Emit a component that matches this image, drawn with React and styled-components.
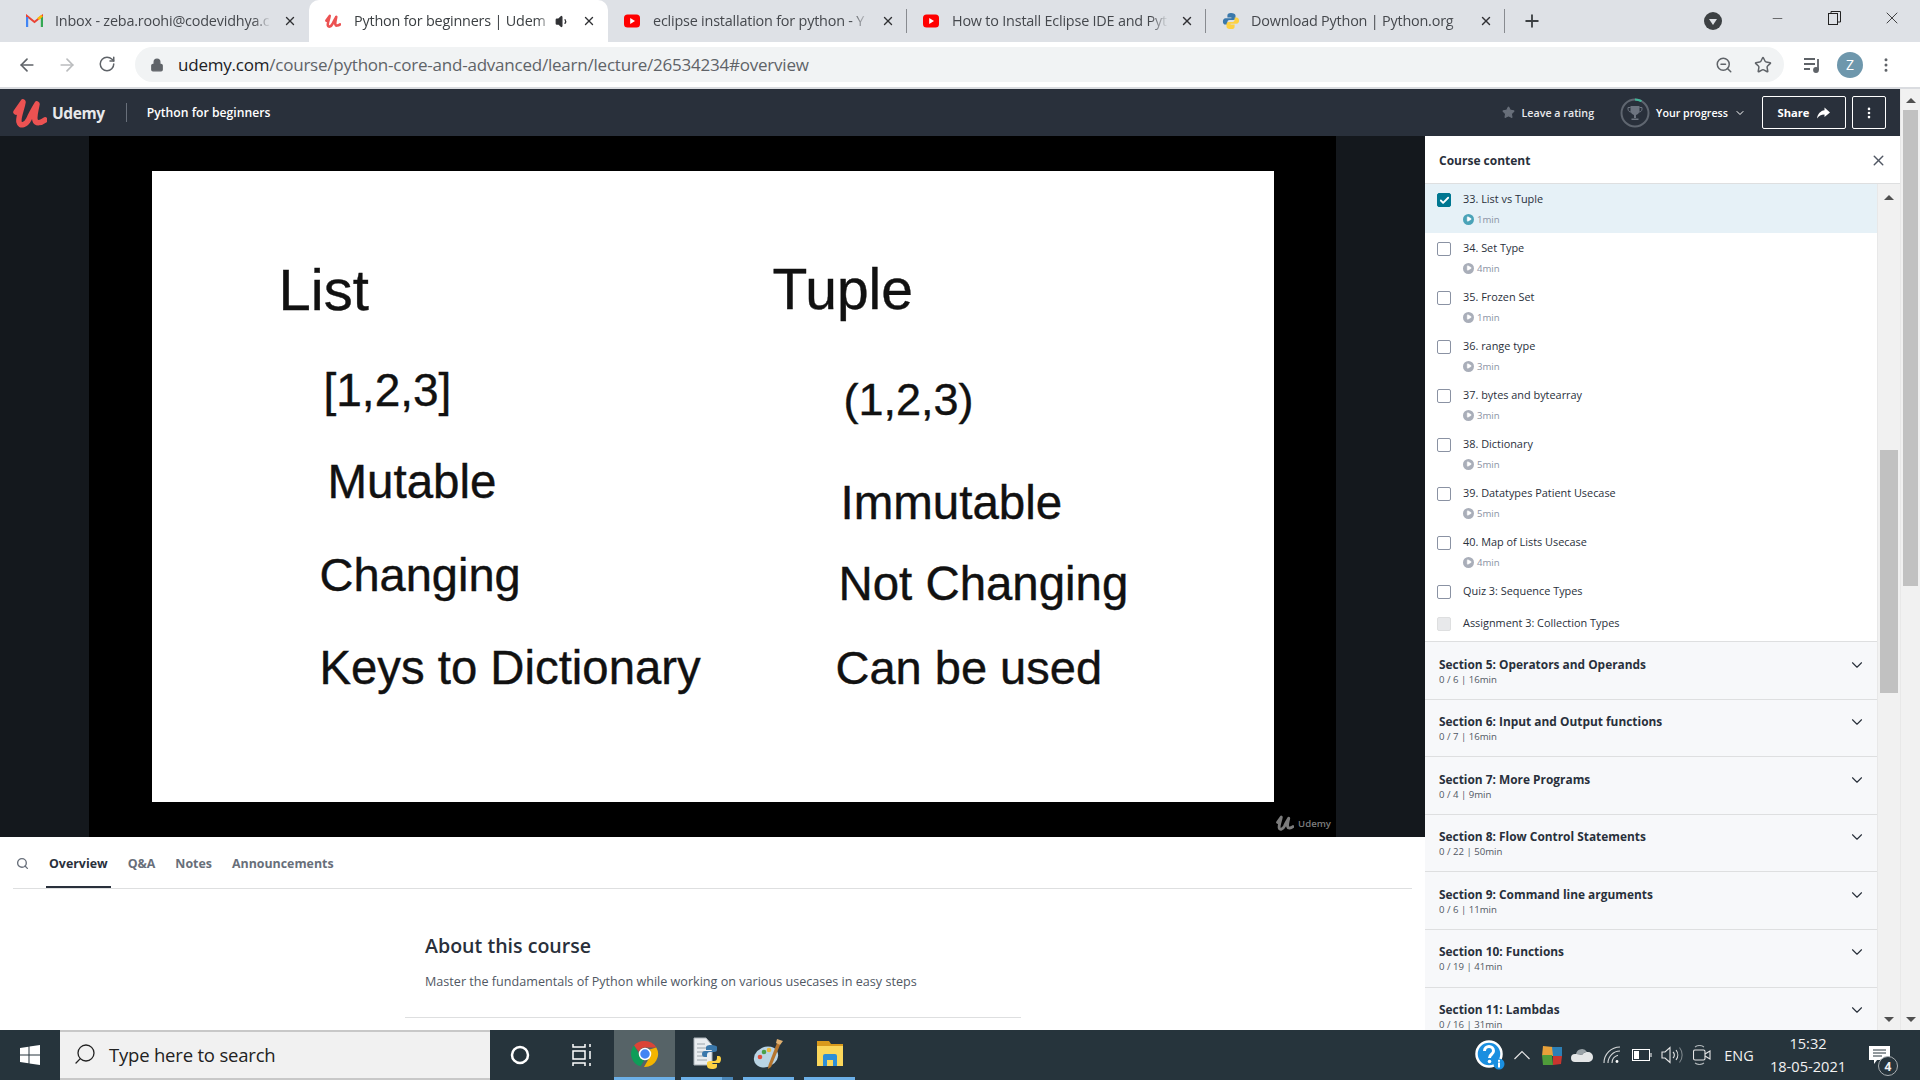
import React from "react";
import styled, { createGlobalStyle } from "styled-components";
import {
  ArrowLeft,
  ArrowRight,
  RotateCw,
  Lock,
  ZoomOut,
  Star,
  X,
  Plus,
  Minus,
  ChevronDown,
  Search,
  Volume1,
  Check,
  Play,
  EllipsisVertical
} from "lucide-react";

const GlobalStyle = createGlobalStyle`
  html, body {
    margin: 0;
    padding: 0;
    background: #fff;
  }
  * {
    box-sizing: border-box;
  }
`;

const uiFont = `"Open Sans", "Noto Sans", sans-serif`;

const Page = styled.div`
  width: 1920px;
  height: 1080px;
  overflow: hidden;
  display: flex;
  flex-direction: column;
  font-family: ${uiFont};
`;

/* browser chrome */
const TabStrip = styled.div`
  height: 42px;
  background: #dee1e6;
  display: flex;
  align-items: stretch;
  padding-left: 10px;
  flex: none;
`;

const Tab = styled.div`
  position: relative;
  width: 299px;
  display: flex;
  align-items: center;
  padding: 0 12px 0 16px;
  background: ${p => (p.$active ? "#fff" : "transparent")};
  border-radius: 10px 10px 0 0;
  color: ${p => (p.$active ? "#3c4043" : "#45484d")};
  font-size: 14.4px;
  letter-spacing: -0.2px;

  &::after {
    content: "";
    display: ${p => (p.$sep ? "block" : "none")};
    position: absolute;
    right: 0;
    top: 9px;
    height: 24px;
    width: 1px;
    background: #888b90;
  }
`;

const TabIcon = styled.span`
  width: 29px;
  flex: none;
  display: flex;
  align-items: center;
`;

const TabTitle = styled.span`
  flex: 1;
  overflow: hidden;
  white-space: nowrap;
  padding-bottom: 2px;
  -webkit-mask-image: linear-gradient(to right, #000 92%, transparent);
  mask-image: linear-gradient(to right, #000 92%, transparent);
`;

const TabAction = styled.span`
  flex: none;
  display: flex;
  align-items: center;
  margin-left: ${p => p.$gap || 4}px;
  color: #303134;
`;

const NewTab = styled.div`
  width: 54px;
  display: flex;
  align-items: center;
  justify-content: center;
  color: #3c4043;
`;

const WindowControls = styled.div`
  margin-left: auto;
  display: flex;
  align-items: flex-start;
  color: #222;
`;

const ProfileDot = styled.div`
  width: 18px;
  height: 18px;
  margin: 12px 27px 0 0;
  border-radius: 50%;
  background: #3c4043;
  display: flex;
  align-items: center;
  justify-content: center;
  &::after {
    content: "";
    border-left: 4px solid transparent;
    border-right: 4px solid transparent;
    border-top: 6px solid #dee1e6;
    margin-top: 2px;
  }
`;

const WinButton = styled.div`
  width: 57px;
  height: 36px;
  display: flex;
  align-items: center;
  justify-content: center;
`;

const Toolbar = styled.div`
  height: 47px;
  flex: none;
  background: #fff;
  border-bottom: 2px solid #dadce0;
  display: flex;
  align-items: center;
  color: #5f6368;
`;

const NavButton = styled.div`
  width: 40px;
  display: flex;
  justify-content: center;
  color: ${p => (p.$dim ? "#babcbe" : "#5f6368")};
`;

const NavGroup = styled.div`
  display: flex;
  width: 135px;
  padding-left: 7px;
`;

const Omnibox = styled.div`
  width: 1649px;
  height: 35px;
  border-radius: 18px;
  background: #f1f3f4;
  display: flex;
  align-items: center;
  padding: 0 8px 0 15px;
`;

const Url = styled.div`
  margin-left: 14px;
  font-size: 17px;
  letter-spacing: -0.22px;
  color: #5f6368;
  b {
    font-weight: 400;
    color: #202124;
  }
`;

const OmniIcons = styled.div`
  margin-left: auto;
  display: flex;
  align-items: center;
  gap: 21px;
  padding-right: 4px;
`;

const ToolbarRight = styled.div`
  display: flex;
  align-items: center;
  padding-left: 19px;
  gap: 14px;
`;

const Avatar = styled.div`
  width: 26px;
  height: 26px;
  border-radius: 50%;
  background: #6e97ac;
  color: #fff;
  font-size: 14px;
  display: flex;
  align-items: center;
  justify-content: center;
`;

/* page under the browser chrome */
const Viewport = styled.div`
  flex: 1;
  min-height: 0;
  display: flex;
`;

const Content = styled.div`
  flex: 1;
  min-width: 0;
  display: flex;
  flex-direction: column;
`;

const Scrollbar = styled.div`
  flex: none;
  width: ${p => p.$width}px;
  background: #f1f1f1;
  display: flex;
  flex-direction: column;
  align-items: center;
  justify-content: space-between;
  padding: ${p => p.$padTop}px 0 8px;
  position: relative;
  border-left: 1px solid #e8e8e8;
`;

const ScrollThumb = styled.div`
  position: absolute;
  left: 2px;
  right: 2px;
  top: ${p => p.$top}px;
  height: ${p => p.$height}px;
  background: #c1c1c1;
`;

const Arrow = styled.div`
  width: 0;
  height: 0;
  border-left: 5px solid transparent;
  border-right: 5px solid transparent;
  border-${p => (p.$down ? "top" : "bottom")}: 5px solid #505050;
`;

const Header = styled.header`
  height: 47px;
  flex: none;
  background: #29303b;
  display: flex;
  align-items: center;
  color: #fff;
  padding: 0 14px 0 13px;
`;

const LogoWord = styled.span`
  font-size: 15.5px;
  font-weight: 700;
  margin-left: 5px;
  color: #e8e9eb;
  letter-spacing: -0.4px;
`;

const HeaderDivider = styled.span`
  width: 1px;
  height: 19px;
  background: #686f7a;
  margin: 0 20px 0 21px;
`;

const CourseTitle = styled.span`
  font-size: 12.2px;
  font-weight: 600;
`;

const HeaderRight = styled.div`
  margin-left: auto;
  display: flex;
  align-items: center;
  font-size: 10.7px;
  font-weight: 600;
`;

const Rating = styled.span`
  display: flex;
  align-items: center;
  gap: 7px;
  margin-right: 26px;
  color: #e8e9eb;
`;

const Progress = styled.span`
  display: flex;
  align-items: center;
  gap: 6px;
  margin-right: 16px;
`;

const HeaderButton = styled.div`
  height: 33px;
  width: ${p => p.$width}px;
  border: 1px solid #fff;
  border-radius: 2px;
  display: flex;
  align-items: center;
  justify-content: center;
  gap: 8px;
  font-size: 11.2px;
  font-weight: 700;
  margin-left: ${p => p.$gap || 0}px;
`;

const Columns = styled.div`
  flex: 1;
  min-height: 0;
  display: grid;
  grid-template-columns: 1425px 475px;
`;

const Main = styled.main`
  display: flex;
  flex-direction: column;
  min-height: 0;
  overflow: hidden;
  background: #fff;
`;

/* video player */
const Player = styled.div`
  height: 701px;
  flex: none;
  background: #14181d;
  display: flex;
  justify-content: center;
`;

const Stage = styled.div`
  width: 1247px;
  position: relative;
  background: #000;
  display: flex;
  justify-content: center;
  padding-top: 35px;
`;

const Slide = styled.div`
  position: relative;
  width: 1122px;
  height: 631px;
  background: #fff;
  font-family: "Liberation Sans", Arial, sans-serif;
  color: #111;
  -webkit-text-stroke: 0.4px #111;
`;

const SlideText = styled.span`
  position: absolute;
  left: ${p => p.$x}px;
  top: ${p => p.$y}px;
  font-size: ${p => p.$size}px;
  line-height: 1;
  white-space: nowrap;
`;

const Watermark = styled.div`
  position: absolute;
  right: 5px;
  bottom: 6px;
  display: flex;
  align-items: center;
  gap: 4px;
  font-size: 9.6px;
  font-weight: 600;
  color: #7c7c7c;
`;

const TabsRow = styled.nav`
  height: 52px;
  flex: none;
  margin: 0 13px;
  display: flex;
  align-items: flex-end;
  border-bottom: 1px solid #dedfe0;
  color: #686f7a;
  font-size: 12.4px;
  font-weight: 700;
`;

const SearchTab = styled.div`
  width: 33px;
  height: 100%;
  display: flex;
  align-items: center;
  padding: 2px 0 0 3px;
`;

const PageTab = styled.div`
  height: 100%;
  display: flex;
  align-items: center;
  padding: 2px 3px 0;
  margin-right: 14px;
  color: ${p => (p.$active ? "#29303b" : "#686f7a")};
  box-shadow: ${p => (p.$active ? "inset 0 -2px 0 #29303b" : "none")};
`;

const About = styled.section`
  width: 616px;
  margin: 44px 0 0 405px;
  border-bottom: 1px solid #dedfe0;
  padding: 0 20px 26px;
  color: #29303b;
`;

const AboutTitle = styled.h2`
  margin: 0 0 14px;
  font-size: 19.6px;
  line-height: 26px;
  font-weight: 600;
`;

const AboutText = styled.p`
  margin: 0;
  font-size: 12.6px;
  line-height: 18px;
  color: #505763;
`;

/* course content sidebar */
const Sidebar = styled.aside`
  display: flex;
  flex-direction: column;
  min-height: 0;
  background: #fff;
`;

const SidebarHeader = styled.div`
  height: 48px;
  flex: none;
  border-bottom: 1px solid #dedfe0;
  display: flex;
  align-items: center;
  justify-content: space-between;
  padding: 1px 13px 0 14px;
  font-size: 12px;
  font-weight: 700;
  color: #29303b;
`;

const SidebarBody = styled.div`
  flex: 1;
  min-height: 0;
  display: flex;
`;

const ContentList = styled.div`
  flex: 1;
  min-width: 0;
  overflow: hidden;
`;

const Lecture = styled.div`
  height: ${p => p.$height}px;
  background: ${p => (p.$current ? "#e6f1f7" : "#fff")};
  display: flex;
  align-items: flex-start;
  padding: ${p => p.$top}px 12px 0;
  gap: 12px;
  color: #29303b;
  font-size: 10.9px;
`;

const CheckBox = styled.span`
  width: 14px;
  height: 14px;
  flex: none;
  border-radius: 2px;
  margin-top: 2px;
  border: 1px solid ${p => (p.$disabled ? "#dedfe0" : p.$checked ? "#007791" : "#8a92a3")};
  background: ${p => (p.$checked ? "#007791" : p.$disabled ? "#e8e9eb" : "#fff")};
  display: flex;
  align-items: center;
  justify-content: center;
  color: #fff;
`;

const LectureName = styled.div`
  line-height: 16px;
`;

const Duration = styled.div`
  display: flex;
  align-items: center;
  gap: 3px;
  margin-top: 6px;
  height: 12px;
  font-size: 9.6px;
  color: #8a92a3;
`;

const PlayDot = styled.span`
  width: 11px;
  height: 11px;
  border-radius: 50%;
  background: ${p => (p.$current ? "#4aa3b8" : "#a9aeb9")};
  display: flex;
  align-items: center;
  justify-content: center;
  color: #fff;
`;

const SectionRow = styled.div`
  height: 57.6px;
  background: #f7f8fa;
  border-top: 1px solid #dedfe0;
  display: flex;
  justify-content: space-between;
  padding: 13.5px 11px 0 14px;
  color: #29303b;
`;

const SectionTitle = styled.div`
  font-size: 11.9px;
  line-height: 17px;
  font-weight: 700;
`;

const SectionMeta = styled.div`
  font-size: 9.6px;
  line-height: 13px;
  color: #505763;
`;

/* windows taskbar */
const Taskbar = styled.footer`
  height: 50px;
  flex: none;
  background: #26343c;
  display: flex;
  align-items: stretch;
  color: #fff;
`;

const StartButton = styled.div`
  width: 60px;
  display: flex;
  align-items: center;
  justify-content: center;
`;

const SearchBox = styled.div`
  width: 430px;
  background: #f1f1f1;
  border: 2px solid #c8c8c8;
  border-left: 0;
  border-right: 0;
  display: flex;
  align-items: center;
  gap: 12px;
  padding: 0 0 2px 13px;
  color: #222;
  font-size: 18.5px;
  letter-spacing: -0.2px;
`;

const MirroredIcon = styled.span`
  display: flex;
  transform: scaleX(-1);
`;

const TaskSlot = styled.div`
  width: ${p => p.$width}px;
  margin-left: ${p => p.$gap || 0}px;
  display: flex;
  align-items: center;
  justify-content: center;
  position: relative;
  background: ${p => (p.$on ? "#566367" : "transparent")};
  border-bottom: ${p => (p.$open ? "3px solid #6cb0e8" : "0")};

  &::after {
    content: "";
    display: ${p => (p.$stacked ? "block" : "none")};
    position: absolute;
    right: 0;
    bottom: -3px;
    width: 11px;
    height: 3px;
    background: #4a86b8;
  }
`;

const Tray = styled.div`
  margin-left: auto;
  display: flex;
  align-items: stretch;
  font-size: 14.4px;
  color: #f2f2f2;
`;

const TraySlot = styled.div`
  width: ${p => p.$width || 30}px;
  display: flex;
  align-items: center;
  justify-content: center;
  text-align: center;
`;

const Clock = styled.div`
  width: 94px;
  align-self: center;
  text-align: center;
  font-size: 14.6px;
  line-height: 23px;
`;

const NotifyButton = styled.div`
  position: relative;
  width: 65px;
  padding-left: 14px;
  display: flex;
  align-items: center;
`;

const NotifyBadge = styled.span`
  position: absolute;
  right: 22px;
  bottom: 4px;
  width: 20px;
  height: 20px;
  border-radius: 50%;
  background: #26343c;
  border: 1.5px solid #aab0b3;
  font-size: 12px;
  font-weight: 700;
  display: flex;
  align-items: center;
  justify-content: center;
`;

const HelpIcon = () => (
  <svg width="30" height="30" viewBox="0 0 30 30">
    <circle cx="14" cy="14" r="12.5" fill="#1a8fe0" stroke="#fff" strokeWidth="2.5" />
    <path d="M9.5 11c0-6 9-6 9 0 0 3.5-4 3-4 7" fill="none" stroke="#fff" strokeWidth="3" />
    <circle cx="14.5" cy="21.5" r="1.8" fill="#fff" />
    <circle cx="24" cy="24" r="5.5" fill="#1a8fe0" />
    <rect x="23" y="22.5" width="2" height="5" fill="#fff" />
    <rect x="23" y="19.8" width="2" height="2" fill="#fff" />
  </svg>
);

const GmailIcon = () => (
  <svg width="17" height="14" viewBox="0 0 17 14">
    <path d="M1 13V2l7.5 6L16 2v11" fill="none" stroke="#ea4335" strokeWidth="2" />
    <path d="M1 3v10" stroke="#4285f4" strokeWidth="2.4" />
    <path d="M16 3v10" stroke="#34a853" strokeWidth="2.4" />
    <path d="M12 5l4-3.2" stroke="#fbbc04" strokeWidth="2.4" />
  </svg>
);

const UdemyMark = ({ width = 16, color = "#ec5252" }) => (
  <svg width={width} height={(width * 30) / 34} viewBox="0 0 34 30">
    <path
      d="M3 14L10 4C9 11 5 19 6 24C7 29 13 27 16 21C18 16 21 11 24 6C23 12 21 18 22 22C23 26 28 25 32 22"
      fill="none"
      stroke={color}
      strokeWidth="5.5"
      strokeLinecap="round"
      strokeLinejoin="round"
    />
  </svg>
);

const YoutubeIcon = () => (
  <svg width="16" height="16" viewBox="0 0 16 16">
    <rect x="0" y="1.5" width="16" height="13" rx="3.5" fill="#f00" />
    <path d="M6.2 5v6L11 8z" fill="#fff" />
  </svg>
);

const PythonIcon = ({ size = 20 }) => (
  <svg width={size} height={size} viewBox="0 0 20 20">
    <path
      d="M10 1C7 1 6 2 6 4v2h4.5v1H4C2 7 1 8.5 1 10.5S2 14 4 14h2v-2.5C6 10 7 9 8.5 9h4C14 9 15 8 15 6.5V4c0-2-2-3-5-3z"
      fill="#3a78ab"
    />
    <path
      d="M10 19c3 0 4-1 4-3v-2H9.5v-1H16c2 0 3-1.5 3-3.5S18 6 16 6h-2v2.5C14 10 13 11 11.5 11h-4C6 11 5 12 5 13.5V16c0 2 2 3 5 3z"
      fill="#fdd142"
    />
  </svg>
);

const ShareArrow = () => (
  <svg width="13" height="12" viewBox="0 0 13 12" fill="#fff">
    <path d="M7.5 0.5L13 5.5 7.5 10V7.5C4 7.5 2 8.8 0 11.5 0.7 7 3.5 3.8 7.5 3.3z" />
  </svg>
);

const ProgressRing = () => (
  <svg width="30" height="30" viewBox="0 0 30 30" fill="none">
    <circle cx="15" cy="15" r="13.5" stroke="#5f6670" strokeWidth="2" />
    <path d="M15 1.5a13.5 13.5 0 0 1 6.5 1.7" stroke="#41b79a" strokeWidth="2" />
    <path d="M10.5 8h9v4.5a4.5 4.5 0 0 1-9 0z" fill="#6d7480" />
    <path d="M10.5 9.500H8v1.500c0 2 1.500 3 3 3M19.500 9.500H22v1.500c0 2-1.500 3-3 3" stroke="#6d7480" />
    <path d="M14 16h2v4h-2zM11.5 20.5h7V22h-7z" fill="#6d7480" />
  </svg>
);

const WindowsLogo = () => (
  <svg width="20" height="20" viewBox="0 0 20 20" fill="#fff">
    <path d="M0 3l8.5-1.200V9.500H0zM9.500 1.600L20 0v9.500H9.500zM0 10.500h8.500v7.700L0 17zM9.500 10.500H20V20L9.500 18.400z" />
  </svg>
);

const TaskViewIcon = () => (
  <svg width="20" height="24" viewBox="0 0 20 24" fill="none" stroke="#fff" strokeWidth="1.5">
    <path d="M1 1v3h12V1M1 8h12v8H1zM1 23v-3h12v3M18 1v3M18 8v8M18 20v3" />
  </svg>
);

const ChromeIcon = () => (
  <svg width="28" height="28" viewBox="0 0 28 28">
    <path d="M14 1a13 13 0 0 1 11.3 6.5H14a6.500 6.500 0 0 0-6.100 4.300L3 5.500A13 13 0 0 1 14 1z" fill="#db4437" />
    <path d="M3 5.500l5.600 9.700A6.500 6.500 0 0 0 13 20.400L9.600 26.300A13 13 0 0 1 3 5.500z" fill="#0f9d58" />
    <path d="M25.300 7.500A13 13 0 0 1 14 27l-1-.1 5.600-9.700A6.500 6.500 0 0 0 18.600 9.500z" fill="#f4b400" />
    <circle cx="14" cy="14" r="5.500" fill="#4285f4" stroke="#fff" strokeWidth="1.500" />
  </svg>
);

const PythonDocIcon = () => (
  <svg width="30" height="34" viewBox="0 0 30 34">
    <path d="M2 1h12l6 7v20H2z" fill="#e9edf0" stroke="#aab2b8" />
    <path d="M5 7h8M5 11h10M5 15h10M5 19h10M5 23h10" stroke="#9aa4aa" />
    <path d="M19 8c-4 0-5 1-5 3v2h6v1h-7c-2 0-3 1-3 3s1 3 3 3h2v-2c0-2 1-3 3-3h4c2 0 3-1 3-2v-3c0-1-2-2-6-2z" fill="#3a78ab" />
    <path d="M20 32c4 0 5-1 5-3v-2h-5v-1h7c1 0 2-2 2-4s-1-3-2-3h-2v2c0 2-1 3-3 3h-4c-2 0-3 1-3 2v3c0 2 2 3 5 3z" fill="#fdd142" />
  </svg>
);

const PaintIcon = () => (
  <svg width="32" height="34" viewBox="0 0 32 34">
    <ellipse cx="13" cy="20" rx="12.5" ry="10" fill="#b9d4e4" transform="rotate(-25 13 20)" />
    <circle cx="7" cy="20" r="2.3" fill="#e0503e" />
    <circle cx="11" cy="15" r="2.3" fill="#4aa04a" />
    <circle cx="16" cy="13" r="2.3" fill="#e8b83a" />
    <path d="M24 6l3 2-9 22-3 2 .5-4z" fill="#b5752e" />
    <path d="M24 2l6 2-3 4-4-2z" fill="#e0b070" />
  </svg>
);

const ExplorerIcon = () => (
  <svg width="28" height="28" viewBox="0 0 28 28">
    <path d="M1 1h12l2 3h12v4H1z" fill="#d99a1c" />
    <path d="M1 6h26v20H1z" fill="#fbd75b" />
    <path d="M7 26V16a2 2 0 0 1 2-2h10a2 2 0 0 1 2 2v10h-4v-6h-6v6z" fill="#2e8ed8" />
  </svg>
);

const Caret = () => (
  <svg width="18" height="12" viewBox="0 0 18 12" fill="none" stroke="#e6e6e6" strokeWidth="1.2">
    <path d="M1.5 10l7.5-7.500 7.500 7.500" />
  </svg>
);

const AvgIcon = () => (
  <svg width="20" height="20" viewBox="0 0 20 20">
    <path d="M1 1l10 1v9H0z" fill="#e8a13a" />
    <path d="M10 2h10v9h-9z" fill="#2c7fb5" />
    <path d="M0 10h10l1 10H1z" fill="#4f9c3a" />
    <path d="M11 11h9l-1 8-8 1z" fill="#c9352f" />
  </svg>
);

const OneDriveIcon = () => (
  <svg width="22" height="14" viewBox="0 0 22 14">
    <path d="M5 6a6 6 0 0 1 11-2c-2 0-4 1-5 3-2-1-4-1-6-1z" fill="#9aa3a8" />
    <path d="M4 14a4 4 0 0 1 0-8c2 0 4 0 7 1 2-3 4-3 6-3a5 5 0 0 1 5 5 5 5 0 0 1-4 5z" fill="#e4e6e7" />
  </svg>
);

const WifiIcon = () => (
  <svg width="18" height="18" viewBox="0 0 18 18" fill="none" stroke="#d6d9da" strokeWidth="1.1">
    <path d="M1 17A16 16 0 0 1 17 1M5 17A12 12 0 0 1 17 5M9 17a8 8 0 0 1 6-7.700" />
    <circle cx="14" cy="15.5" r="1.4" fill="#fff" stroke="none" />
  </svg>
);

const BatteryIcon = () => (
  <svg width="20" height="12" viewBox="0 0 20 12" fill="none" stroke="#fff">
    <rect x="0.5" y="0.5" width="17" height="11" />
    <rect x="2" y="2" width="5" height="8" fill="#fff" stroke="none" />
    <path d="M19 4v4" />
  </svg>
);

const SpeakerIcon = () => (
  <svg width="22" height="18" viewBox="0 0 22 18" fill="none" stroke="#e6e6e6" strokeWidth="1.1">
    <path d="M1 6h3l5-4.500v15L4 12H1z" />
    <path d="M12 6a4 4 0 0 1 0 6" />
    <path d="M15 4a8 8 0 0 1 0 10" />
    <path d="M18.5 1.500a12 12 0 0 1 0 15" stroke="#7d868b" />
  </svg>
);

const MeetIcon = () => (
  <svg width="18" height="20" viewBox="0 0 18 20" fill="none" stroke="#e6e6e6" strokeWidth="1.1">
    <rect x="0.5" y="5" width="11.5" height="10" rx="1.5" />
    <path d="M12 9l5-3v8l-5-3" />
    <path d="M2 2a8 8 0 0 1 9 0M2 18a8 8 0 0 0 9 0" stroke="#aeb4b7" />
  </svg>
);

const lectures = [
  { name: "33. List vs Tuple", time: "1min", current: true },
  { name: "34. Set Type", time: "4min" },
  { name: "35. Frozen Set", time: "1min" },
  { name: "36. range type", time: "3min" },
  { name: "37. bytes and bytearray", time: "3min" },
  { name: "38. Dictionary", time: "5min" },
  { name: "39. Datatypes Patient Usecase", time: "5min" },
  { name: "40. Map of Lists Usecase", time: "4min" }
];

const sections = [
  { title: "Section 5: Operators and Operands", meta: "0 / 6 | 16min" },
  { title: "Section 6: Input and Output functions", meta: "0 / 7 | 16min" },
  { title: "Section 7: More Programs", meta: "0 / 4 | 9min" },
  { title: "Section 8: Flow Control Statements", meta: "0 / 22 | 50min" },
  { title: "Section 9: Command line arguments", meta: "0 / 6 | 11min" },
  { title: "Section 10: Functions", meta: "0 / 19 | 41min" },
  { title: "Section 11: Lambdas", meta: "0 / 16 | 31min" }
];

const slideTexts = [
  { text: "List", x: 127, y: 90, size: 58 },
  { text: "Tuple", x: 621, y: 90, size: 57 },
  { text: "[1,2,3]", x: 172, y: 196, size: 46 },
  { text: "(1,2,3)", x: 692, y: 206, size: 45 },
  { text: "Mutable", x: 176, y: 287, size: 47.5 },
  { text: "Immutable", x: 689, y: 308, size: 47.5 },
  { text: "Changing", x: 168, y: 380, size: 47 },
  { text: "Not Changing", x: 687, y: 389, size: 47.4 },
  { text: "Keys to Dictionary", x: 168, y: 473, size: 47.3 },
  { text: "Can be used", x: 684, y: 473, size: 47 }
];

const browserTabs = [
  { title: "Inbox - zeba.roohi@codevidhya.c", icon: <GmailIcon /> },
  { title: "Python for beginners | Udem", icon: <UdemyMark />, active: true, audio: true },
  { title: "eclipse installation for python - Y", icon: <YoutubeIcon />, sep: true },
  { title: "How to Install Eclipse IDE and Pyt", icon: <YoutubeIcon />, sep: true },
  { title: "Download Python | Python.org", icon: <PythonIcon size={18} />, sep: true }
];

const App = () => {
  return (
    <Page>
      <GlobalStyle />
      <TabStrip>
        {browserTabs.map(tab => (
          <Tab key={tab.title} $active={tab.active} $sep={tab.sep}>
            <TabIcon>{tab.icon}</TabIcon>
            <TabTitle>{tab.title}</TabTitle>
            {tab.audio && (
              <TabAction $gap={2}>
                <Volume1 size={15} fill="#303134" />
              </TabAction>
            )}
            <TabAction $gap={12}>
              <X size={14} strokeWidth={2.4} />
            </TabAction>
          </Tab>
        ))}
        <NewTab>
          <Plus size={20} strokeWidth={2.2} />
        </NewTab>
        <WindowControls>
          <ProfileDot />
          <WinButton>
            <Minus size={15} strokeWidth={1} />
          </WinButton>
          <WinButton>
            <svg width="13" height="14" viewBox="0 0 13 14" fill="none" stroke="#222">
              <rect x="0.5" y="2.5" width="9" height="11" />
              <path d="M3 2.500V.5h9.500v10.500h-3" />
            </svg>
          </WinButton>
          <WinButton>
            <X size={20} strokeWidth={1} />
          </WinButton>
        </WindowControls>
      </TabStrip>

      <Toolbar>
        <NavGroup>
          <NavButton>
            <ArrowLeft size={20} />
          </NavButton>
          <NavButton $dim>
            <ArrowRight size={20} />
          </NavButton>
          <NavButton>
            <RotateCw size={18} />
          </NavButton>
        </NavGroup>
        <Omnibox>
          <Lock size={14} fill="#5f6368" />
          <Url>
            <b>udemy.com</b>/course/python-core-and-advanced/learn/lecture/26534234#overview
          </Url>
          <OmniIcons>
            <ZoomOut size={18} />
            <Star size={18} />
          </OmniIcons>
        </Omnibox>
        <ToolbarRight>
          <svg width="20" height="16" viewBox="0 0 20 16" fill="none" stroke="#5f6368" strokeWidth="1.8">
            <path d="M1 2h11M1 7h11M1 12h6M15 2v11" />
            <circle cx="13" cy="13" r="2" fill="#5f6368" />
          </svg>
          <Avatar>Z</Avatar>
          <EllipsisVertical size={18} />
        </ToolbarRight>
      </Toolbar>

      <Viewport>
        <Content>
          <Header>
            <UdemyMark width={34} />
            <LogoWord>Udemy</LogoWord>
            <HeaderDivider />
            <CourseTitle>Python for beginners</CourseTitle>
            <HeaderRight>
              <Rating>
                <Star size={13} fill="#686f7a" stroke="#686f7a" />
                Leave a rating
              </Rating>
              <Progress>
                <ProgressRing />
                Your progress
                <ChevronDown size={12} />
              </Progress>
              <HeaderButton $width={84}>
                Share
                <ShareArrow />
              </HeaderButton>
              <HeaderButton $width={34} $gap={6}>
                <EllipsisVertical size={14} strokeWidth={2.5} />
              </HeaderButton>
            </HeaderRight>
          </Header>
          <Columns>
            <Main>
              <Player>
                <Stage>
                  <Slide>
                    {slideTexts.map(item => (
                      <SlideText key={item.text} $x={item.x} $y={item.y} $size={item.size}>
                        {item.text}
                      </SlideText>
                    ))}
                  </Slide>
                  <Watermark>
                    <UdemyMark width={18} color="#7c7c7c" />
                    Udemy
                  </Watermark>
                </Stage>
              </Player>
              <TabsRow>
                <SearchTab>
                  <Search size={13} strokeWidth={2.5} />
                </SearchTab>
                <PageTab $active>Overview</PageTab>
                <PageTab>Q&amp;A</PageTab>
                <PageTab>Notes</PageTab>
                <PageTab>Announcements</PageTab>
              </TabsRow>
              <About>
                <AboutTitle>About this course</AboutTitle>
                <AboutText>Master the fundamentals of Python while working on various usecases in easy steps</AboutText>
              </About>
            </Main>
            <Sidebar>
              <SidebarHeader>
                Course content
                <X size={17} color="#505763" />
              </SidebarHeader>
              <SidebarBody>
                <ContentList>
                  {lectures.map(item => (
                    <Lecture key={item.name} $height={49} $top={7} $current={item.current}>
                      <CheckBox $checked={item.current}>
                        {item.current && <Check size={11} strokeWidth={4} />}
                      </CheckBox>
                      <div>
                        <LectureName>{item.name}</LectureName>
                        <Duration>
                          <PlayDot $current={item.current}>
                            <Play size={6} fill="#fff" />
                          </PlayDot>
                          {item.time}
                        </Duration>
                      </div>
                    </Lecture>
                  ))}
                  <Lecture $height={32} $top={7}>
                    <CheckBox />
                    <LectureName>Quiz 3: Sequence Types</LectureName>
                  </Lecture>
                  <Lecture $height={33} $top={7}>
                    <CheckBox $disabled />
                    <LectureName>Assignment 3: Collection Types</LectureName>
                  </Lecture>
                  {sections.map(section => (
                    <SectionRow key={section.title}>
                      <div>
                        <SectionTitle>{section.title}</SectionTitle>
                        <SectionMeta>{section.meta}</SectionMeta>
                      </div>
                      <ChevronDown size={18} strokeWidth={1.5} />
                    </SectionRow>
                  ))}
                </ContentList>
                <Scrollbar $width={23} $padTop={11}>
                  <Arrow />
                  <ScrollThumb $top={266} $height={243} />
                  <Arrow $down />
                </Scrollbar>
              </SidebarBody>
            </Sidebar>
          </Columns>
        </Content>
        <Scrollbar $width={20} $padTop={9}>
          <Arrow />
          <ScrollThumb $top={21} $height={476} />
          <Arrow $down />
        </Scrollbar>
      </Viewport>

      <Taskbar>
        <StartButton>
          <WindowsLogo />
        </StartButton>
        <SearchBox>
          <MirroredIcon>
            <Search size={24} strokeWidth={1.3} />
          </MirroredIcon>
          Type here to search
        </SearchBox>
        <TaskSlot $width={60}>
          <svg width="20" height="20" viewBox="0 0 20 20" fill="none" stroke="#fff" strokeWidth="2.5">
            <circle cx="10" cy="10" r="8" />
          </svg>
        </TaskSlot>
        <TaskSlot $width={64}>
          <TaskViewIcon />
        </TaskSlot>
        <TaskSlot $width={61} $on $open>
          <ChromeIcon />
        </TaskSlot>
        <TaskSlot $width={52} $gap={6} $open $stacked>
          <PythonDocIcon />
        </TaskSlot>
        <TaskSlot $width={51} $gap={10} $open>
          <PaintIcon />
        </TaskSlot>
        <TaskSlot $width={51} $gap={10} $open>
          <ExplorerIcon />
        </TaskSlot>
        <Tray>
          <TraySlot $width={35}>
            <HelpIcon />
          </TraySlot>
          <TraySlot>
            <Caret />
          </TraySlot>
          <TraySlot>
            <AvgIcon />
          </TraySlot>
          <TraySlot>
            <OneDriveIcon />
          </TraySlot>
          <TraySlot>
            <WifiIcon />
          </TraySlot>
          <TraySlot>
            <BatteryIcon />
          </TraySlot>
          <TraySlot>
            <SpeakerIcon />
          </TraySlot>
          <TraySlot>
            <MeetIcon />
          </TraySlot>
          <TraySlot $width={44}>ENG</TraySlot>
          <Clock>
            15:32
            <br />
            18-05-2021
          </Clock>
          <NotifyButton>
            <svg width="21" height="18" viewBox="0 0 21 18" fill="#fff">
              <path d="M0 0h21v14H8l-3 4v-4H0z" />
              <path d="M4 4h13M4 7h13M4 10h9" stroke="#26343c" strokeWidth="1" />
            </svg>
            <NotifyBadge>4</NotifyBadge>
          </NotifyButton>
        </Tray>
      </Taskbar>
    </Page>
  );
};

export default App;
